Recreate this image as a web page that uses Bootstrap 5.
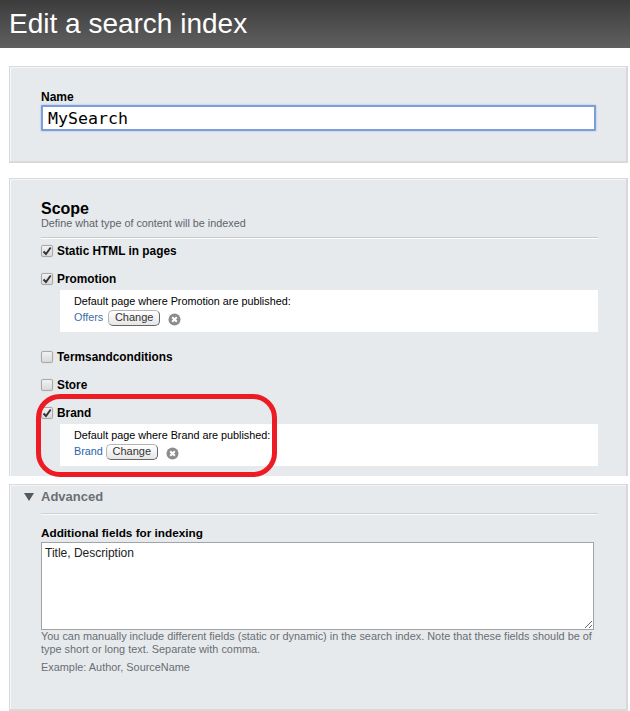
<!DOCTYPE html>
<html lang="en">
<head>
<meta charset="utf-8">
<title>Edit a search index</title>
<link href="https://cdn.jsdelivr.net/npm/bootstrap@5.3.0/dist/css/bootstrap.min.css" rel="stylesheet">
<style>
html,body{height:711px;overflow:hidden}
body{background:#fff;font-family:"Liberation Sans",Arial,sans-serif;font-size:12px;line-height:14px;color:#000;position:relative}
.page-head{height:48px;background:linear-gradient(#3c3c3c,#606060);color:#fff;font-size:28px;line-height:48px;padding-left:9px;margin:0;font-weight:400;letter-spacing:0}
.pane{margin:0 2px 0 9px;background:#e7eaed;border:1px solid #d9d9d9;border-bottom-width:2px;border-right-width:2px;box-shadow:inset 1px 1px 0 #f6f7f8;padding-left:31px;padding-right:30px}
.pane-name{margin-top:18px;height:97px;padding-top:23px}
.pane-scope{margin-top:15px;height:298px;padding-top:21px;border-bottom:0}
.pane-adv{margin-top:8px;height:227px;padding-top:5px}
.fld-label{display:block;font-weight:700;line-height:14px;margin:0}
.name-input{display:block;width:555px;height:26px;margin-top:1px;padding:0 5px;border:2px solid #7b9fd6;border-radius:1px;box-shadow:0 0 2px #8fb4ee;font-family:"DejaVu Sans Mono","Liberation Mono",monospace;font-size:16.6px;color:#000;background:#fff;outline:0}
.sec-title{font-size:16px;font-weight:700;line-height:18px}
.sec-sub{font-size:10.8px;line-height:12px;color:#5f6368;margin-top:-1px}
.sec-rule{border-top:1px solid #c9c9c9;border-bottom:1px solid #fff;height:2px;width:557px;margin-top:8px}
.chk-row{height:14px;font-size:11.85px;font-weight:700;gap:4px;align-items:center}
.chk-box{appearance:none;-webkit-appearance:none;width:12px;height:12px;flex:none;margin:0;border:1px solid #a9a9a9;border-radius:2px;background:linear-gradient(#f2f2f2,#d9d9d9);background-repeat:no-repeat;background-position:center;box-shadow:0 0 1px #bbb}
.chk-box:checked{background-image:url("data:image/svg+xml,%3Csvg xmlns='http://www.w3.org/2000/svg' width='10' height='10' viewBox='0 0 10 10'%3E%3Cpath d='M1.5 5.5 4 8 8.7 1.5' fill='none' stroke='%23333' stroke-width='1.9'/%3E%3C/svg%3E"),linear-gradient(#f2f2f2,#d9d9d9)}
.sub-box{background:#fff;margin-left:19px;width:538px;height:42px;padding:4px 14px 0;font-size:10.8px;line-height:14px}
.sub-line{height:20px;margin-top:0;align-items:center;gap:3px}
.sub-link{color:#1f63b0;text-decoration:none;margin-top:-2px}
.sub-link-dim{color:#3b6ea8;margin-right:2px}
.chg-btn{font:11px/13px "Liberation Sans",Arial,sans-serif;height:16px;width:52px;padding:0 0 1px;color:#333;background:linear-gradient(#fff,#e6e6e6);border:1px solid #b5b5b5;border-right-color:#666;border-bottom-color:#666;border-radius:5px}
.x-ico{width:13px;height:13px;margin-left:5px;margin-top:2px;flex:none}
.adv-head{font-size:13px;font-weight:700;line-height:14px;color:#6b6f73;height:16px;position:relative}
.adv-tri{position:absolute;left:-17px;top:3px;width:0;height:0;border-left:5px solid transparent;border-right:5px solid transparent;border-top:8px solid #55595c}
.adv-rule{border-top:1px solid #cfcfcf;border-bottom:1px solid #fafafa;height:2px;width:557px;margin-top:7px}
.fld-area{display:block;width:553px;height:88px;margin-top:2px;padding:3px;border:1px solid #a3a3a3;border-radius:0;font:12px/14px "Liberation Sans",Arial,sans-serif;color:#222;background:#fff;outline:0}
.adv-label{font-size:11.75px}
.help-txt{font-size:10.9px;line-height:13px;color:#6a6e72;margin:0;width:556px}
.help-first{margin-top:0}
.help-next{margin-top:5px}
.red-ring{position:absolute;left:36px;top:394px;width:241px;height:83px;border:5px solid #ed1c24;border-radius:24px;pointer-events:none}
</style>
</head>
<body>
<h1 class="page-head">Edit a search index</h1>

<section class="pane pane-name">
  <label class="fld-label" for="nm">Name</label>
  <input id="nm" class="name-input" type="text" value="MySearch">
</section>

<section class="pane pane-scope">
  <div class="sec-title">Scope</div>
  <div class="sec-sub">Define what type of content will be indexed</div>
  <div class="sec-rule"></div>
  <div class="chk-row d-flex" style="margin-top:5px"><input class="chk-box" type="checkbox" checked><span>Static HTML in pages</span></div>
  <div class="chk-row d-flex" style="margin-top:14px"><input class="chk-box" type="checkbox" checked><span>Promotion</span></div>
  <div class="sub-box" style="margin-top:4px">
    <div>Default page where Promotion are published:</div>
    <div class="sub-line d-flex"><a class="sub-link sub-link-dim" href="#">Offers</a><button class="chg-btn" type="button">Change</button>
      <svg class="x-ico" viewBox="0 0 13 13"><circle cx="6.5" cy="6.5" r="6" fill="#8c8c8c"/><path d="M4.2 4.2l4.6 4.6M8.8 4.2 4.2 8.8" stroke="#fff" stroke-width="2"/></svg></div>
  </div>
  <div class="chk-row d-flex" style="margin-top:18px"><input class="chk-box" type="checkbox"><span>Termsandconditions</span></div>
  <div class="chk-row d-flex" style="margin-top:14px"><input class="chk-box" type="checkbox"><span>Store</span></div>
  <div class="chk-row d-flex" style="margin-top:14px"><input class="chk-box" type="checkbox" checked><span>Brand</span></div>
  <div class="sub-box" style="margin-top:4px">
    <div>Default page where Brand are published:</div>
    <div class="sub-line d-flex"><a class="sub-link" href="#">Brand</a><button class="chg-btn" type="button">Change</button>
      <svg class="x-ico" viewBox="0 0 13 13"><circle cx="6.5" cy="6.5" r="6" fill="#8c8c8c"/><path d="M4.2 4.2l4.6 4.6M8.8 4.2 4.2 8.8" stroke="#fff" stroke-width="2"/></svg></div>
  </div>
</section>

<section class="pane pane-adv">
  <div class="adv-head"><span class="adv-tri"></span>Advanced</div>
  <div class="adv-rule"></div>
  <label class="fld-label adv-label" for="ta" style="margin-top:11px">Additional fields for indexing</label>
  <textarea id="ta" class="fld-area">Title, Description</textarea>
  <p class="help-txt help-first">You can manually include different fields (static or dynamic) in the search index. Note that these fields should be of type short or long text. Separate with comma.</p>
  <p class="help-txt help-next">Example: Author, SourceName</p>
</section>

<div class="red-ring"></div>
<script src="https://cdn.jsdelivr.net/npm/bootstrap@5.3.0/dist/js/bootstrap.bundle.min.js"></script>
</body>
</html>
